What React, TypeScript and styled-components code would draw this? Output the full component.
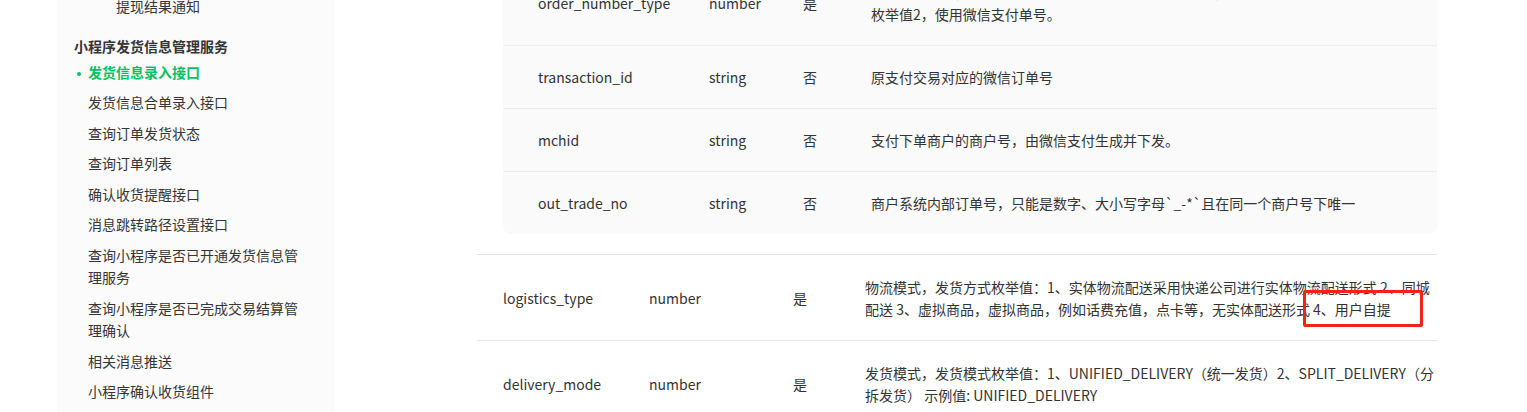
import React from 'react';
import styled, {createGlobalStyle, css} from 'styled-components';

const GlobalStyle = createGlobalStyle`
    html, body {
        margin: 0;
        padding: 0;
        background: #ffffff;
    }

    body {
        font-family: "Noto Sans CJK SC", "Noto Sans", sans-serif;
        font-size: 14px;
        color: #333333;
        overflow: hidden;
    }
`;

const Page = styled.div`
    display: flex;
    align-items: flex-start;
    height: 412px;
    overflow: hidden;
    padding-left: 57px;
`;

const Sidebar = styled.nav`
    width: 277px;
    flex-shrink: 0;
    height: 412px;
    background-color: #fbfbfb;
    overflow: hidden;
`;

const NavList = styled.div`
    display: flex;
    flex-direction: column;
    margin-top: -9px;
`;

const NavGroupTitle = styled.div`
    margin-top: 13px;
    padding-left: 17px;
    line-height: 22px;
    font-weight: bold;
    color: #353535;
`;

const NavItem = styled.a<{ $active?: boolean; $depth?: number }>`
    display: block;
    padding: 4px 30px 4px ${p => (p.$depth === 2 ? 59 : 31)}px;
    line-height: 22.5px;
    color: #353535;
    text-decoration: none;
    cursor: pointer;

    ${p => p.$active && css`
        color: #07c160;
        font-weight: bold;

        &::before {
            content: "";
            display: inline-block;
            width: 4px;
            height: 4px;
            border-radius: 50%;
            background-color: #07c160;
            margin: 0 7px 0 -11px;
            vertical-align: middle;
        }
    `}
`;

const Main = styled.main`
    margin-left: 143px;
    width: 960px;
    flex-shrink: 0;
`;

const Table = styled.div`
    display: flex;
    flex-direction: column;
    margin-top: -39px;
`;

const NestedWrap = styled.div`
    padding: 0 0 20px 26px;
`;

const NestedTable = styled.div`
    background-color: #fafafa;
    border-radius: 0 0 8px 8px;
`;

const NestedRow = styled.div`
    display: grid;
    grid-template-columns: 171px 94px 68px 1fr;
    align-items: center;
    padding: 20px 0;
    line-height: 22px;

    & + & {
        border-top: 1px solid #eeeeee;
    }
`;

const NestedCell = styled.div`
    padding-left: 35px;
`;

const Row = styled.div`
    display: grid;
    grid-template-columns: 146px 144px 72px 1fr;
    align-items: center;
    padding: 21px 0 20px;
    line-height: 22px;
    border-top: 1px solid #e5e5e5;
`;

const Cell = styled.div`
    padding-left: 26px;
`;

const Marked = styled.span`
    position: relative;

    &::after {
        content: "";
        position: absolute;
        left: -10px;
        right: -32px;
        top: -9px;
        bottom: -8px;
        border: 3px solid #f5221b;
        border-radius: 2px;
    }
`;

const navItems = [
    '发货信息合单录入接口',
    '查询订单发货状态',
    '查询订单列表',
    '确认收货提醒接口',
    '消息跳转路径设置接口',
    '查询小程序是否已开通发货信息管理服务',
    '查询小程序是否已完成交易结算管理确认',
    '相关消息推送',
    '小程序确认收货组件',
];

const nestedRows = [
    {name: 'transaction_id', type: 'string', required: '否', desc: '原支付交易对应的微信订单号'},
    {name: 'mchid', type: 'string', required: '否', desc: '支付下单商户的商户号，由微信支付生成并下发。'},
    {name: 'out_trade_no', type: 'string', required: '否', desc: '商户系统内部订单号，只能是数字、大小写字母`_-*`且在同一个商户号下唯一'},
];

const App: React.FC = () => {
    return (
        <>
            <GlobalStyle/>
            <Page>
                <Sidebar>
                    <NavList>
                        <NavItem $depth={2}>提现结果通知</NavItem>
                        <NavGroupTitle>小程序发货信息管理服务</NavGroupTitle>
                        <NavItem $active>发货信息录入接口</NavItem>
                        {navItems.map(item => (
                            <NavItem key={item}>{item}</NavItem>
                        ))}
                    </NavList>
                </Sidebar>

                <Main>
                    <Table>
                        <NestedWrap>
                            <NestedTable>
                                <NestedRow>
                                    <NestedCell>order_number_type</NestedCell>
                                    <NestedCell>number</NestedCell>
                                    <NestedCell>是</NestedCell>
                                    <NestedCell>
                                        订单单号类型，用于确认需要上传详情的订单。枚举值1，使用下单商户号和商户侧单号<br/>
                                        枚举值2，使用微信支付单号。
                                    </NestedCell>
                                </NestedRow>
                                {nestedRows.map(r => (
                                    <NestedRow key={r.name}>
                                        <NestedCell>{r.name}</NestedCell>
                                        <NestedCell>{r.type}</NestedCell>
                                        <NestedCell>{r.required}</NestedCell>
                                        <NestedCell>{r.desc}</NestedCell>
                                    </NestedRow>
                                ))}
                            </NestedTable>
                        </NestedWrap>

                        <Row>
                            <Cell>logistics_type</Cell>
                            <Cell>number</Cell>
                            <Cell>是</Cell>
                            <Cell>
                                物流模式，发货方式枚举值：1、实体物流配送采用快递公司进行实体物流配送形式 2、同城配送 3、虚拟商品，虚拟商品，例如话费充值，点卡等，无实体配送形式 <Marked>4、用户自提</Marked>
                            </Cell>
                        </Row>
                        <Row>
                            <Cell>delivery_mode</Cell>
                            <Cell>number</Cell>
                            <Cell>是</Cell>
                            <Cell>
                                发货模式，发货模式枚举值：1、UNIFIED_DELIVERY（统一发货）2、SPLIT_DELIVERY（分拆发货） 示例值: UNIFIED_DELIVERY
                            </Cell>
                        </Row>
                    </Table>
                </Main>
            </Page>
        </>
    );
};

export default App;
